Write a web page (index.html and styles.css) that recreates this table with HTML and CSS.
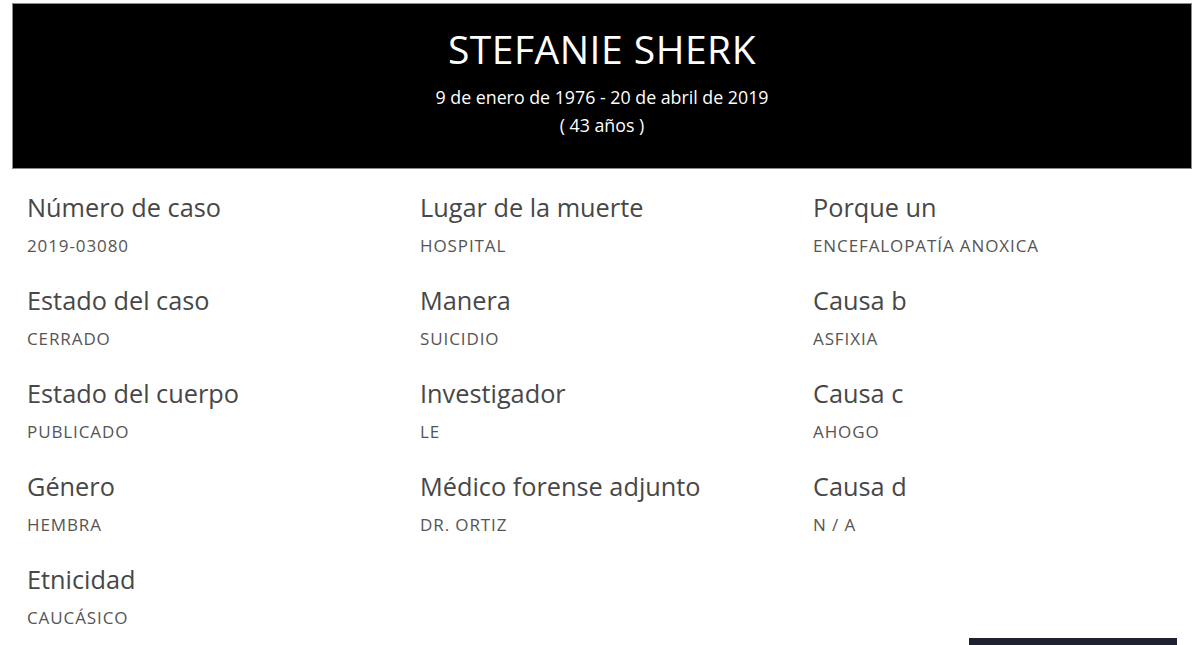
FILE: index.html
```html
<!DOCTYPE html>
<html lang="es">
<head>
<meta charset="utf-8">
<title>Stefanie Sherk</title>
<link rel="stylesheet" href="styles.css">
</head>
<body>
<div class="page">
  <header class="hero">
    <h1 class="hero-name">STEFANIE SHERK</h1>
    <p class="hero-dates">9 de enero de 1976 - 20 de abril de 2019</p>
    <p class="hero-age">( 43 años )</p>
  </header>
  <section class="details">
    <div class="col">
      <div class="item"><div class="label">Número de caso</div><div class="value">2019-03080</div></div>
      <div class="item"><div class="label">Estado del caso</div><div class="value">CERRADO</div></div>
      <div class="item"><div class="label">Estado del cuerpo</div><div class="value">PUBLICADO</div></div>
      <div class="item"><div class="label">Género</div><div class="value">HEMBRA</div></div>
      <div class="item"><div class="label">Etnicidad</div><div class="value">CAUCÁSICO</div></div>
    </div>
    <div class="col">
      <div class="item"><div class="label">Lugar de la muerte</div><div class="value">HOSPITAL</div></div>
      <div class="item"><div class="label">Manera</div><div class="value">SUICIDIO</div></div>
      <div class="item"><div class="label">Investigador</div><div class="value">LE</div></div>
      <div class="item"><div class="label">Médico forense adjunto</div><div class="value">DR. ORTIZ</div></div>
    </div>
    <div class="col">
      <div class="item"><div class="label">Porque un</div><div class="value">ENCEFALOPATÍA ANOXICA</div></div>
      <div class="item"><div class="label">Causa b</div><div class="value">ASFIXIA</div></div>
      <div class="item"><div class="label">Causa c</div><div class="value">AHOGO</div></div>
      <div class="item"><div class="label">Causa d</div><div class="value">N / A</div></div>
    </div>
  </section>
  <div class="actions">
    <button class="btn" type="button">&nbsp;</button>
  </div>
</div>
</body>
</html>
```

FILE: styles.css
```css
html, body {
  margin: 0;
  padding: 0;
  background: #ffffff;
}

body {
  font-family: "Open Sans", "Liberation Sans", sans-serif;
  color: #444;
}

.page {
  padding: 3px 8px 0 12px;
}

.hero {
  background: #000;
  border: 1px solid #8a8a8a;
  box-sizing: border-box;
  height: 166px;
  padding: 22px 0 0;
  text-align: center;
  color: #fff;
}

.hero-name {
  margin: 0;
  font-size: 39px;
  line-height: 46px;
  font-weight: 400;
  letter-spacing: 0.5px;
}

.hero-dates,
.hero-age {
  margin: 0;
  font-size: 17.8px;
  line-height: 28px;
  font-weight: 400;
}

.hero-dates {
  margin-top: 11px;
}

.details {
  display: grid;
  grid-template-columns: 393px 393px 1fr;
  padding: 21px 15px 0;
}

.col {
  display: flex;
  flex-direction: column;
  gap: 25px;
}

.label {
  font-size: 25.3px;
  line-height: 34px;
  font-weight: 400;
  color: #474747;
}

.value {
  margin-top: 10px;
  font-size: 17px;
  line-height: 24px;
  color: #555;
  letter-spacing: 0.9px;
}

.actions {
  display: flex;
  justify-content: flex-end;
  padding: 8px 15px 0;
}

.btn {
  width: 208px;
  height: 40px;
  border: 0;
  background: #1f2131;
  color: #fff;
}
```
